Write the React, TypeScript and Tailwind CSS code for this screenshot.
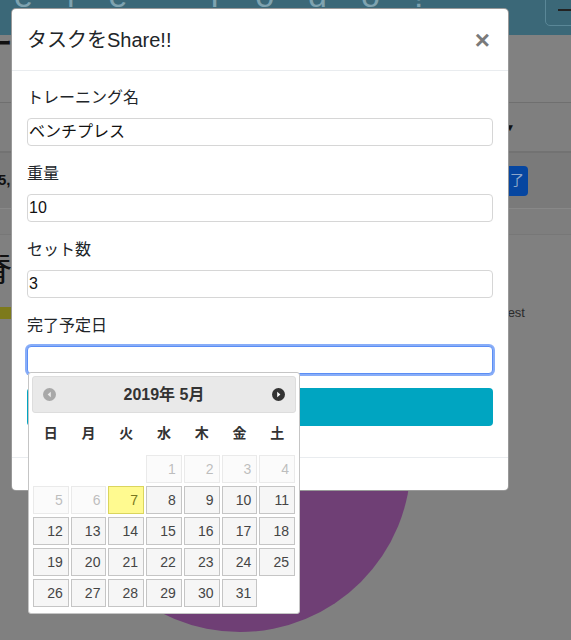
import React from "react";

const font = { fontFamily: '"Liberation Sans", "Noto Sans CJK JP", sans-serif' };

const weekdays = ["日", "月", "火", "水", "木", "金", "土"];

type Cell = { d: number | null; off?: boolean; today?: boolean };

const cells: Cell[] = [
  { d: null }, { d: null }, { d: null },
  { d: 1, off: true }, { d: 2, off: true }, { d: 3, off: true }, { d: 4, off: true },
  { d: 5, off: true }, { d: 6, off: true }, { d: 7, today: true },
  ...Array.from({ length: 24 }, (_, i) => ({ d: i + 8 })),
];

function Field({ label, value, focused }: { label: string; value: string; focused?: boolean }) {
  return (
    <div className="mb-4">
      <div className="text-[16px] leading-[24px] text-[#212529] mb-2">{label}</div>
      <div
        className={
          focused
            ? "h-[28px] rounded-[4px] border border-[#5b8ef5] shadow-[0_0_0_2px_rgba(96,146,246,0.75)] bg-white"
            : "h-[28px] rounded-[4px] border border-[#d6d6d6] bg-white flex items-center pl-[1px] text-[16px] text-[#111]"
        }
      >
        {value}
      </div>
    </div>
  );
}

function Datepicker() {
  return (
    <div className="absolute left-[16px] top-[363px] w-[272px] bg-white border border-[#c5c5c5] rounded-[3px] p-[3px] pb-[6px]">
      <div className="h-[37px] bg-[#e9e9e9] border border-[#dddddd] rounded-[3px] flex items-center justify-between px-[10px]">
        <svg width="13" height="13" viewBox="0 0 13 13">
          <circle cx="6.5" cy="6.5" r="6.5" fill="#a8a8a8" />
          <path d="M7.8 3.8 L4.6 6.5 L7.8 9.2 Z" fill="#e9e9e9" />
        </svg>
        <div className="text-[16px] font-bold text-[#333]">2019年 5月</div>
        <svg width="13" height="13" viewBox="0 0 13 13">
          <circle cx="6.5" cy="6.5" r="6.5" fill="#333" />
          <path d="M5.2 3.8 L8.4 6.5 L5.2 9.2 Z" fill="#fff" />
        </svg>
      </div>
      <div className="px-[1px]">
        <div className="grid grid-cols-7 gap-x-[2px] h-[40px] items-center">
          {weekdays.map((w) => (
            <div key={w} className="text-center text-[14px] font-bold text-[#333]">{w}</div>
          ))}
        </div>
        <div className="grid grid-cols-7 gap-x-[2px] gap-y-[3px] mt-[2px]">
          {cells.map((c, i) =>
            c.d === null ? (
              <div key={i} className="h-[28px]" />
            ) : (
              <div
                key={i}
                className={
                  c.today
                    ? "h-[28px] border border-[#dad55e] bg-[#fffa90] text-[#777620] text-right pr-[5px] text-[14px] leading-[26px]"
                    : c.off
                    ? "h-[28px] border border-[#c5c5c5] bg-[#f6f6f6] text-[#454545] text-right pr-[5px] text-[14px] leading-[26px] opacity-35"
                    : "h-[28px] border border-[#c5c5c5] bg-[#f6f6f6] text-[#454545] text-right pr-[5px] text-[14px] leading-[26px]"
                }
              >
                {c.d}
              </div>
            )
          )}
        </div>
      </div>
    </div>
  );
}

export default function App() {
  return (
    <div className="relative w-[571px] h-[640px] overflow-hidden bg-[#808080]" style={font}>
      {/* dimmed page behind */}
      <div className="relative h-[35px] bg-[#3b6878] overflow-hidden">
        <div className="absolute left-[14px] top-[-30px] text-[34px] tracking-[34px] text-[#7fa3b0] whitespace-nowrap">
          ele Todo!
        </div>
        <div className="absolute left-[545px] top-[-6px] w-[40px] h-[32px] border border-[#5a8797] rounded-[5px] flex items-center pl-[12px]">
          <div className="w-[16px] h-[2px] bg-[#222]" />
        </div>
      </div>
      <div className="h-[68px] border-b border-[#6f6f6f] bg-[#818181]">
        <div className="-ml-[12px] text-[24px] font-bold text-[#111] leading-[18px]">ー</div>
      </div>
      <div className="h-[50px] border-b-2 border-[#727272] bg-[#7f7f7f] flex items-center justify-end pr-[56px]">
        <span className="text-[10px] text-[#111]">▼</span>
      </div>
      <div className="h-[55px] bg-[#7a7a7a] flex items-center justify-between pr-[43px]">
        <span className="-ml-[2px] text-[15px] font-bold text-[#111]">5,</span>
        <div className="w-[24px] h-[30px] bg-[#0646a0] rounded-[4px] text-[#8ea6c9] text-[14px] flex items-center justify-end pr-[4px]">
          了
        </div>
      </div>
      <div className="h-[27px] border-t border-[#888] border-b border-b-[#777] bg-[#7e7e7e]" />
      <div className="h-[68px] flex items-center">
        <span className="-ml-[22px] text-[34px] text-[#111]">脊</span>
      </div>
      <div className="flex items-center justify-between pr-[46px]">
        <div className="w-[12px] h-[12px] bg-[#7d7a1c]" />
        <span className="text-[13px] text-[#2b2b2b]">test</span>
      </div>
      <svg className="absolute left-0 top-0" width="571" height="640">
        <circle cx="240" cy="461" r="171" fill="#6f3f75" />
      </svg>

      {/* modal */}
      <div className="absolute left-[11px] top-[8px] w-[498px] bg-white rounded-[5px] border border-black/40">
        <div className="h-[62px] border-b border-[#e9ecef] flex items-center justify-between pl-[15px] pr-[18px]">
          <div className="text-[20px] text-[#212529]">タスクをShare!!</div>
          <div className="text-[26px] font-bold text-[#7a7a7a] leading-none">×</div>
        </div>
        <div className="p-[15px]">
          <Field label="トレーニング名" value="ベンチプレス" />
          <Field label="重量" value="10" />
          <Field label="セット数" value="3" />
          <Field label="完了予定日" value="" focused />
          <div className="h-[38px] -mt-[2px] mb-[16px] rounded-[4px] bg-[#00a5c1]" />
        </div>
        <div className="h-[33px] border-t border-[#e9ecef]" />
        <Datepicker />
      </div>
    </div>
  );
}
